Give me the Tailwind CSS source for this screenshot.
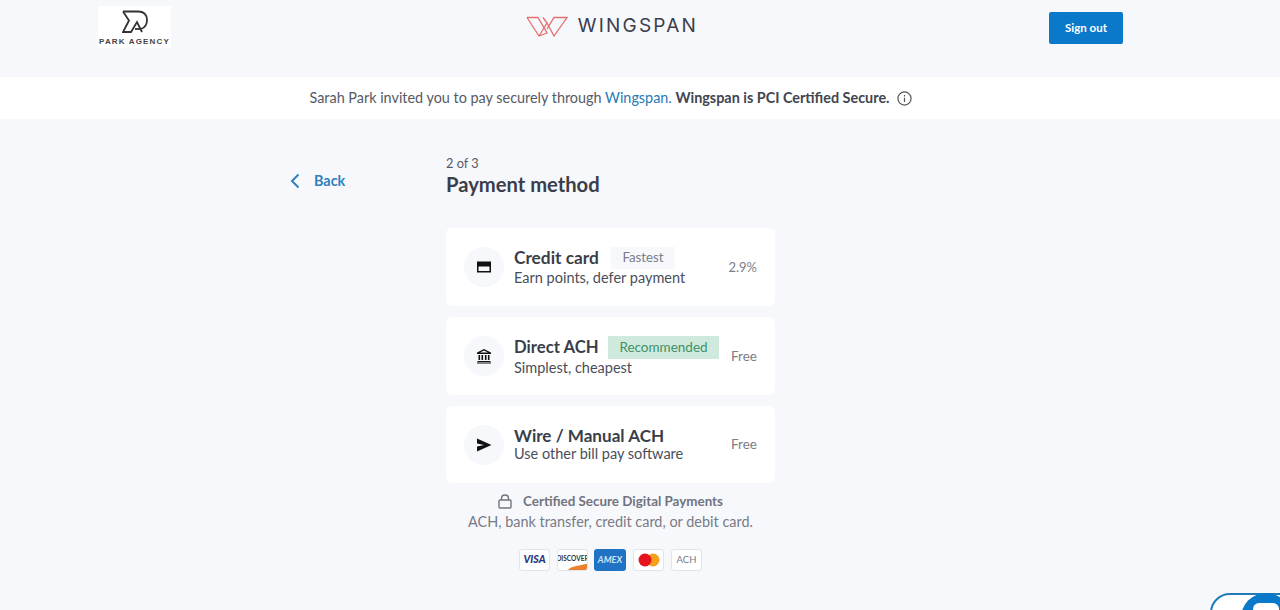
<!DOCTYPE html>
<html lang="en">
  <head>
    <meta charset="UTF-8" />
    <meta name="viewport" content="width=device-width, initial-scale=1.0" />
    <title>Payment method</title>
    <script src="https://cdn.jsdelivr.net/npm/@tailwindcss/browser@4"></script>
  </head>
  <body class="bg-[#f7f8fc] text-[#30343f] font-['Lato','Noto_Sans',sans-serif] h-[610px] overflow-hidden relative">
    <!-- Header -->
    <header class="h-[77px] pl-[98px] pr-[157px] pt-[6px] flex items-start justify-between">
      <div class="w-[73px] h-[42px] bg-white flex flex-col items-center pt-[4px]">
        <svg width="27" height="24" viewBox="0 0 27 24" fill="none" stroke="#333" stroke-width="1.8" class="ml-[2px]">
          <path d="M1 1.500H16Q25 1.500 25 10Q25 17 19 19" />
          <path d="M1 1.500L7 10.500L1 22H9L15 12L20 22" />
          <path d="M13 19H18" />
        </svg>
        <span class="text-[8px] leading-[9px] mt-[3px] font-bold tracking-[1.15px] text-[#444] whitespace-nowrap font-['Liberation_Sans',sans-serif]">PARK AGENCY</span>
      </div>
      <div class="flex items-center gap-[10px] mt-[9px] ml-[4px]">
        <svg width="42" height="21" viewBox="0 0 42 21" fill="none" stroke="#e4716c" stroke-width="1.3">
          <path d="M1 1.500H12L21 17L13 20L1 1.500" />
          <path d="M13 20L21 7L28 20L41 1.500H28L21 13" />
          <path d="M21 7L17 1.500" />
        </svg>
        <span class="text-[19px] leading-[22px] tracking-[2.2px] text-[#3c404c] font-['Inter',sans-serif]">WINGSPAN</span>
      </div>
      <button class="w-[74px] h-[32px] mt-[6px] bg-[#0a79c9] rounded-[2px] text-white text-[11.5px] font-bold">Sign out</button>
    </header>

    <!-- Invite banner -->
    <div class="h-[42px] bg-white flex items-center justify-center gap-[8px] text-[14.4px] pr-[58px]">
      <p class="text-[#565a66]">
        Sarah Park invited you to pay securely through
        <a class="text-[#1f7ab8]">Wingspan.</a>
        <span class="font-bold text-[#41454f]">Wingspan is PCI Certified Secure.</span>
      </p>
      <svg width="15" height="15" viewBox="0 0 15 15" fill="none" stroke="#555" stroke-width="1.2">
        <circle cx="7.5" cy="7.5" r="6.6" />
        <path d="M7.5 6.8V11M7.5 4V5.4" />
      </svg>
    </div>

    <!-- Main -->
    <main class="pl-[290px] pt-[36px] flex">
      <a class="w-[156px] h-[52px] flex items-center gap-[14px] text-[14.4px] font-bold text-[#2f80bd]">
        <svg width="10" height="16" viewBox="0 0 10 16" fill="none" stroke="#2f80bd" stroke-width="2">
          <path d="M8.500 1.500L2 8L8.500 14.500" />
        </svg>
        Back
      </a>
      <div class="w-[329px]">
        <p class="text-[12.8px] leading-[16px] text-[#565a66]">2 of 3</p>
        <h1 class="text-[20.2px] leading-[26px] font-bold text-[#3a3e49]">Payment method</h1>

        <div class="mt-[31px] flex flex-col gap-[11px]">
          <div class="h-[78px] bg-white rounded-[6px] px-[18px] flex items-center">
            <div class="w-[40px] h-[40px] rounded-full bg-[#f7f8fc] flex items-center justify-center shrink-0">
              <svg width="16" height="16" viewBox="0 0 16 16"><path fill="#111" fill-rule="evenodd" d="M1 2.500h14v11H1zM2.500 7.500V12h11V7.500z" /></svg>
            </div>
            <div class="ml-[10px] flex-1">
              <div class="flex items-center">
                <span class="w-[97px] text-[17.300px] leading-[22px] font-bold text-[#3a3e49]">Credit card</span>
                <span class="w-[64px] h-[22px] text-center bg-[#f7f8fc] text-[13.300px] leading-[21px] text-[#7a7e89]">Fastest</span>
              </div>
              <p class="text-[14.5px] leading-[19px] -mt-[1px] text-[#4a4e5a]">Earn points, defer payment</p>
            </div>
            <span class="text-[13px] mt-[1px] text-[#7a7e89]">2.9%</span>
          </div>

          <div class="h-[78px] bg-white rounded-[6px] px-[18px] flex items-center">
            <div class="w-[40px] h-[40px] rounded-full bg-[#f7f8fc] flex items-center justify-center shrink-0">
              <svg width="16" height="16" viewBox="0 0 16 16" fill="#111">
                <path d="M8 1L15 4.600V6H1V4.600ZM8 2.500L4 4.600H12Z" fill-rule="evenodd" />
                <path d="M2.500 7h1.600v5H2.500zM5.500 7h1.600v5H5.500zM8.900 7h1.600v5H8.900zM11.900 7h1.600v5h-1.600zM1.500 13h13v1H1.500zM1 14.500h14v1H1z" />
              </svg>
            </div>
            <div class="ml-[10px] flex-1">
              <div class="flex items-center">
                <span class="w-[94px] text-[16.700px] leading-[22px] font-bold text-[#3a3e49]">Direct ACH</span>
                <span class="w-[111px] h-[23px] text-center bg-[#cfe9dc] text-[13.500px] leading-[23px] text-[#3f9268]">Recommended</span>
              </div>
              <p class="text-[14.5px] leading-[19px] -mt-[1px] text-[#4a4e5a]">Simplest, cheapest</p>
            </div>
            <span class="text-[13.500px] mt-[1px] text-[#7a7e89]">Free</span>
          </div>

          <div class="h-[77px] bg-white rounded-[6px] px-[18px] flex items-center">
            <div class="w-[40px] h-[40px] rounded-full bg-[#f7f8fc] flex items-center justify-center shrink-0">
              <svg width="16" height="14" viewBox="0 0 16 14" fill="#111"><path d="M1 0.500L15.500 7L1 13.500V8.500L8 7L1 5.500Z" /></svg>
            </div>
            <div class="ml-[10px] flex-1">
              <span class="block text-[17.100px] leading-[20px] font-bold text-[#3a3e49]">Wire / Manual ACH</span>
              <p class="text-[14.5px] leading-[18px] -mt-[1px] text-[#4a4e5a]">Use other bill pay software</p>
            </div>
            <span class="text-[13.500px] text-[#7a7e89]">Free</span>
          </div>
        </div>

        <!-- Secure note -->
        <div class="mt-[8px] flex items-center justify-center gap-[11px] text-[13.400px] leading-[20px] font-bold text-[#70747f]">
          <svg width="14" height="15" viewBox="0 0 14 15" fill="none" stroke="#70747f" stroke-width="1.400">
            <rect x="1" y="6" width="12" height="8" rx="1" />
            <path d="M3.500 6V4.500Q3.500 1 7 1Q10.500 1 10.500 4.500V6" />
          </svg>
          Certified Secure Digital Payments
        </div>
        <p class="mt-[1px] text-center text-[14.450px] leading-[20px] text-[#777b86]">ACH, bank transfer, credit card, or debit card.</p>

        <div class="mt-[17px] pl-[73px] flex gap-[7px]">
          <div class="w-[31px] h-[22px] bg-white border border-[#e3e5ea] rounded-[3px] flex items-center justify-center text-[10.500px] font-black italic text-[#28357d]">VISA</div>
          <div class="w-[31px] h-[22px] bg-white border border-[#e3e5ea] rounded-[3px] relative overflow-hidden flex items-start justify-center pt-[5px] text-[6.500px] leading-[8px] font-bold text-[#333]">
            DISCOVER
            <div class="absolute -right-[2px] -bottom-[5px] w-[24px] h-[9px] bg-[#ee7f2d] rounded-tl-[20px] -rotate-12"></div>
          </div>
          <div class="w-[32px] h-[22px] -ml-[1px] bg-[#1f72c4] rounded-[3px] flex items-center justify-center text-[9px] font-bold italic text-[#cfe2f5]">AMEX</div>
          <div class="w-[31px] h-[22px] bg-white border border-[#e3e5ea] rounded-[3px] flex items-center justify-center">
            <svg width="22" height="14" viewBox="0 0 22 14">
              <circle cx="15" cy="7" r="6.500" fill="#f5a01f" />
              <circle cx="7" cy="7" r="6.500" fill="#e8141c" />
            </svg>
          </div>
          <div class="w-[31px] h-[22px] bg-white border border-[#e3e5ea] rounded-[3px] flex items-center justify-center text-[9.500px] text-[#777b86]">ACH</div>
        </div>
      </div>
    </main>

    <!-- Chat widget peeking in from the corner -->
    <div class="absolute right-0 bottom-0 w-[70px] h-[18px] overflow-hidden">
      <div class="absolute left-0 top-[1px] w-[90px] h-[40px] rounded-full border-2 border-[#1f7ab8] bg-white"></div>
      <div class="absolute left-[31px] top-[1px] w-[50px] h-[50px] rounded-full bg-[#0a79c9] flex justify-center">
        <div class="w-[26px] h-[22px] mt-[10px] bg-white rounded-[6px]"></div>
      </div>
    </div>
  </body>
</html>
